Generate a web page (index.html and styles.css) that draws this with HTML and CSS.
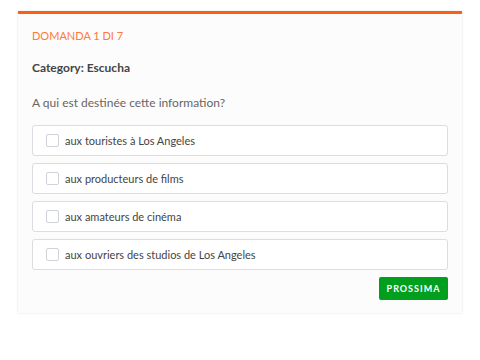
FILE: index.html
```html
<!DOCTYPE html>
<html lang="it">
<head>
    <meta charset="UTF-8">
    <title>Quiz</title>
    <link rel="stylesheet" href="styles.css">
</head>
<body>
    <div class="quiz-card">
        <div class="quiz-step">DOMANDA 1 DI 7</div>
        <div class="quiz-category">Category: Escucha</div>
        <div class="quiz-question">A qui est destinée cette information?</div>
        <div class="answers">
            <label class="answer"><span class="box"></span><span>aux touristes à Los Angeles</span></label>
            <label class="answer"><span class="box"></span><span>aux producteurs de films</span></label>
            <label class="answer"><span class="box"></span><span>aux amateurs de cinéma</span></label>
            <label class="answer"><span class="box"></span><span>aux ouvriers des studios de Los Angeles</span></label>
        </div>
        <div class="actions">
            <button class="next-btn">PROSSIMA</button>
        </div>
    </div>
</body>
</html>
```

FILE: styles.css
```css
body {
    margin: 0;
    padding: 11px 18px;
    background: #fff;
    font-family: Lato, "Noto Sans", sans-serif;
}

.quiz-card {
    background: #fcfcfc;
    border-top: 3px solid #ff5e0e;
    box-shadow: 0 0 2px rgba(0, 0, 0, 0.12);
    padding: 14px 14px 12px;
    height: 302px;
    box-sizing: border-box;
}

.quiz-step {
    color: #ff7a38;
    font-size: 11px;
    line-height: 16px;
}

.quiz-category {
    color: #444;
    font-size: 12px;
    font-weight: bold;
    line-height: 18px;
    margin-top: 15px;
}

.quiz-question {
    color: #666;
    font-size: 12px;
    line-height: 18px;
    margin-top: 17px;
}

.answers {
    display: flex;
    flex-direction: column;
    gap: 7px;
    margin-top: 13px;
}

.answer {
    display: flex;
    align-items: center;
    height: 31px;
    box-sizing: border-box;
    border: 1px solid #dcdde1;
    border-radius: 3px;
    background: #fff;
    padding-left: 13px;
    color: #444;
    font-size: 11px;
}

.box {
    width: 11px;
    height: 11px;
    border: 1px solid #cfd2d8;
    border-radius: 2px;
    margin-right: 6px;
}

.actions {
    display: flex;
    justify-content: flex-end;
    margin-top: 7px;
}

.next-btn {
    width: 69px;
    height: 23px;
    border: none;
    border-radius: 2px;
    background: #00a01e;
    color: #fff;
    font-family: inherit;
    font-size: 9px;
    font-weight: bold;
    letter-spacing: 1px;
    padding: 0;
}
```
